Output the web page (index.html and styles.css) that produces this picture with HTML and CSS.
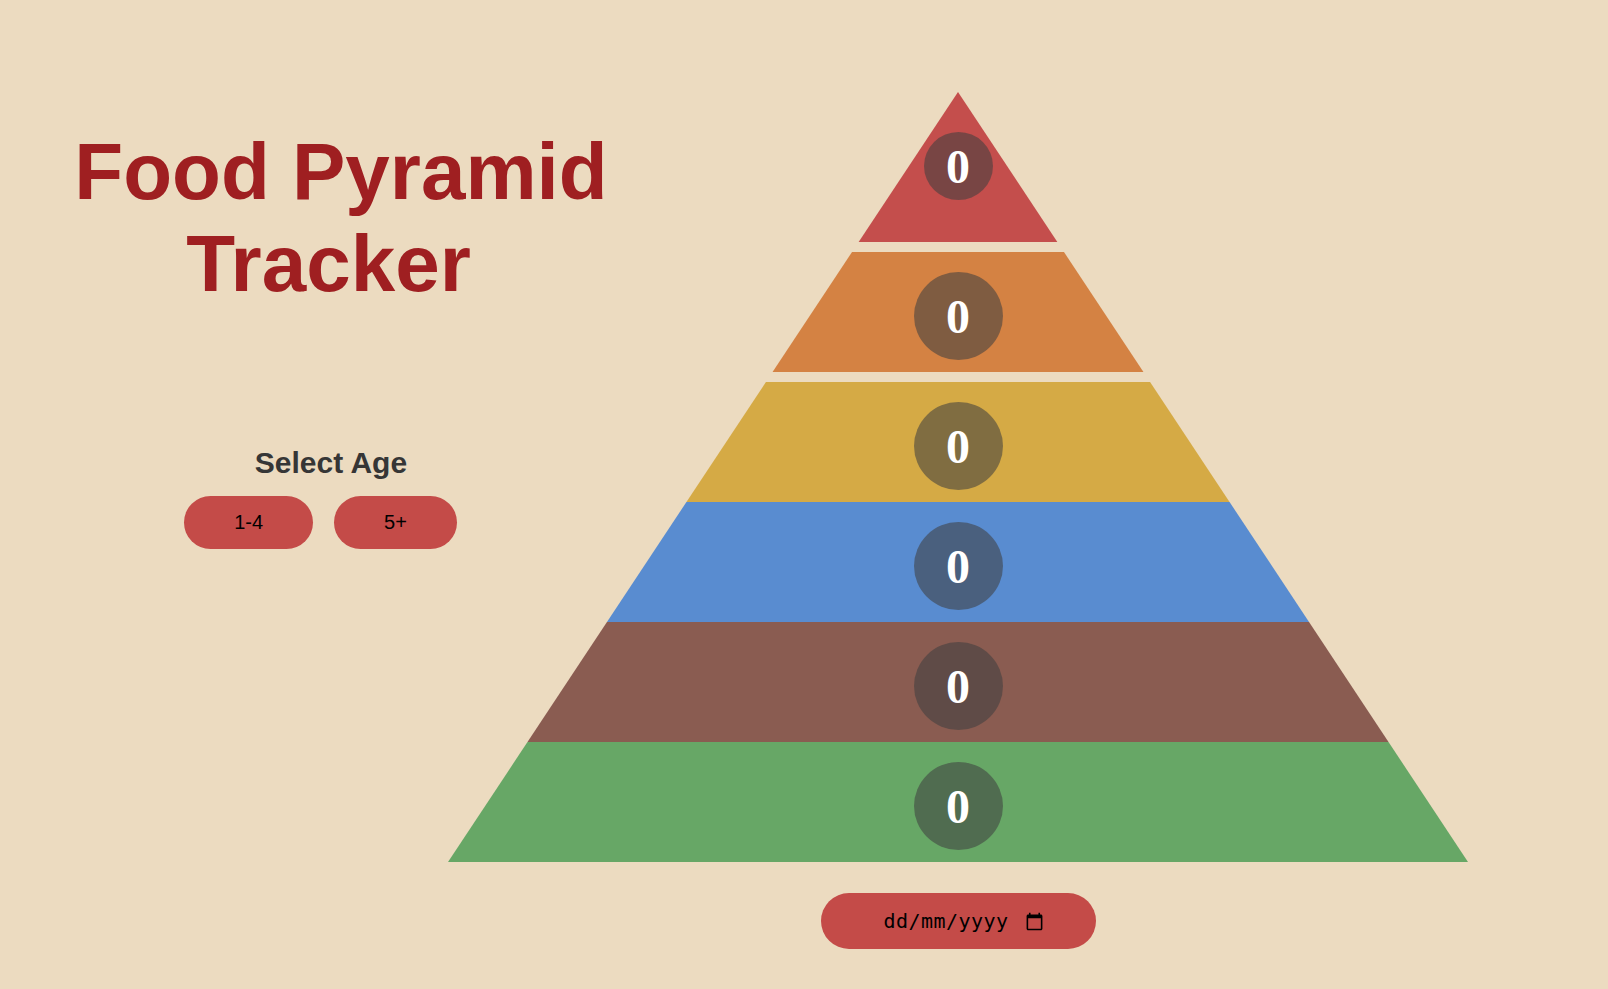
FILE: index.html
```html
<!DOCTYPE html>
<html lang="en-GB">
<head>
<meta charset="utf-8">
<title>Food Pyramid Tracker</title>
<link rel="stylesheet" href="styles.css">
</head>
<body>
<main class="page">
  <section class="side">
    <h1 class="title"><span class="title-line title-line-1">Food Pyramid</span> <span class="title-line title-line-2">Tracker</span></h1>
    <div class="age">
      <h2 class="age-label">Select Age</h2>
      <div class="age-buttons">
        <button class="age-btn" type="button">1-4</button>
        <button class="age-btn" type="button">5+</button>
      </div>
    </div>
  </section>
  <section class="tracker">
    <div class="pyramid">
      <div class="layer layer-top"><span class="count count-sm">0</span></div>
      <div class="layer layer-2"><span class="count">0</span></div>
      <div class="layer layer-3"><span class="count">0</span></div>
      <div class="layer layer-4"><span class="count">0</span></div>
      <div class="layer layer-5"><span class="count">0</span></div>
      <div class="layer layer-6"><span class="count">0</span></div>
    </div>
    <label class="date">
      <input class="date-input" type="text" placeholder="dd/mm/yyyy" aria-label="Date">
      <svg class="date-icon" viewBox="0 0 24 24" width="19" height="19" aria-hidden="true"><path d="M20 3h-1V1h-2v2H7V1H5v2H4c-1.1 0-2 .9-2 2v16c0 1.1.9 2 2 2h16c1.1 0 2-.9 2-2V5c0-1.1-.9-2-2-2zm0 18H4V8h16v13z"/></svg>
    </label>
  </section>
</main>
</body>
</html>
```
FILE: styles.css
```css
* { box-sizing: border-box; }
html, body { margin: 0; padding: 0; }
body {
  background: #ecdbc0;
  font-family: "Liberation Sans", Arial, sans-serif;
  height: 989px;
  overflow: hidden;
}
.page {
  display: flex;
  align-items: flex-start;
}
.side {
  flex: 0 0 662px;
  width: 662px;
  padding-top: 126px;
  text-align: center;
}
.title {
  margin: 0;
  font-size: 80px;
  font-weight: 700;
  line-height: normal;
  color: #9f1f21;
}
.title-line { display: block; }
.title-line-1 { padding-left: 20px; }
.title-line-2 { padding-right: 5px; }
.age { margin-top: 136px; }
.age-label {
  margin: 0;
  font-size: 30px;
  font-weight: 700;
  line-height: normal;
  color: #363636;
}
.age-buttons {
  display: flex;
  justify-content: center;
  margin-top: 16px;
}
.age-btn {
  margin: 0 21px 0 0;
  height: 53px;
  padding: 0 50px;
  border: none;
  border-radius: 27px;
  background: #c44b48;
  color: #000;
  font-family: "Liberation Sans", Arial, sans-serif;
  font-size: 20px;
}
.tracker {
  flex: 0 0 1020px;
  width: 1020px;
  margin-left: -214px;
  padding-top: 92px;
  display: flex;
  flex-direction: column;
  align-items: center;
}
.pyramid {
  width: 1020px;
  display: flex;
  flex-direction: column;
}
.layer {
  width: 1020px;
  height: 120px;
  display: flex;
  justify-content: center;
  align-items: flex-start;
  padding-top: 20px;
}
.layer-top {
  height: 150px;
  padding-top: 40px;
  background: #c44e4c;
  clip-path: polygon(510px 0, 609.35px 100%, 410.65px 100%);
}
.layer-2 {
  margin-top: 10px;
  background: #d48243;
  clip-path: polygon(404.03px 0, 615.97px 0, 695.45px 100%, 324.55px 100%);
}
.layer-3 {
  margin-top: 10px;
  background: #d5aa45;
  clip-path: polygon(317.92px 0, 702.08px 0, 781.56px 100%, 238.44px 100%);
}
.layer-4 {
  background: #598cd0;
  clip-path: polygon(238.44px 0, 781.56px 0, 861.04px 100%, 158.96px 100%);
}
.layer-5 {
  background: #8a5c51;
  clip-path: polygon(158.96px 0, 861.04px 0, 940.52px 100%, 79.48px 100%);
}
.layer-6 {
  background: #67a766;
  clip-path: polygon(79.48px 0, 940.52px 0, 1020px 100%, 0 100%);
}
.count {
  width: 89px;
  height: 88px;
  border-radius: 50%;
  background: rgba(64, 64, 64, 0.57);
  color: #fff;
  font-family: "Liberation Serif", "Times New Roman", serif;
  font-weight: 700;
  font-size: 48px;
  display: flex;
  align-items: center;
  justify-content: center;
}
.count-sm {
  width: 69px;
  height: 68px;
}
.date {
  margin-top: 31px;
  width: 275px;
  height: 56px;
  padding-left: 63px;
  border-radius: 28px;
  background: #c44b48;
  display: flex;
  align-items: center;
}
.date-input {
  width: 126px;
  padding: 0;
  margin: 0;
  border: none;
  background: transparent;
  color: #000;
  font-family: "DejaVu Sans Mono", monospace;
  font-size: 20px;
  letter-spacing: 0.45px;
  line-height: normal;
  outline: none;
}
.date-input::placeholder { color: #000; opacity: 1; }
.date-icon {
  flex: none;
  margin-left: 15px;
  fill: #000;
}
```
